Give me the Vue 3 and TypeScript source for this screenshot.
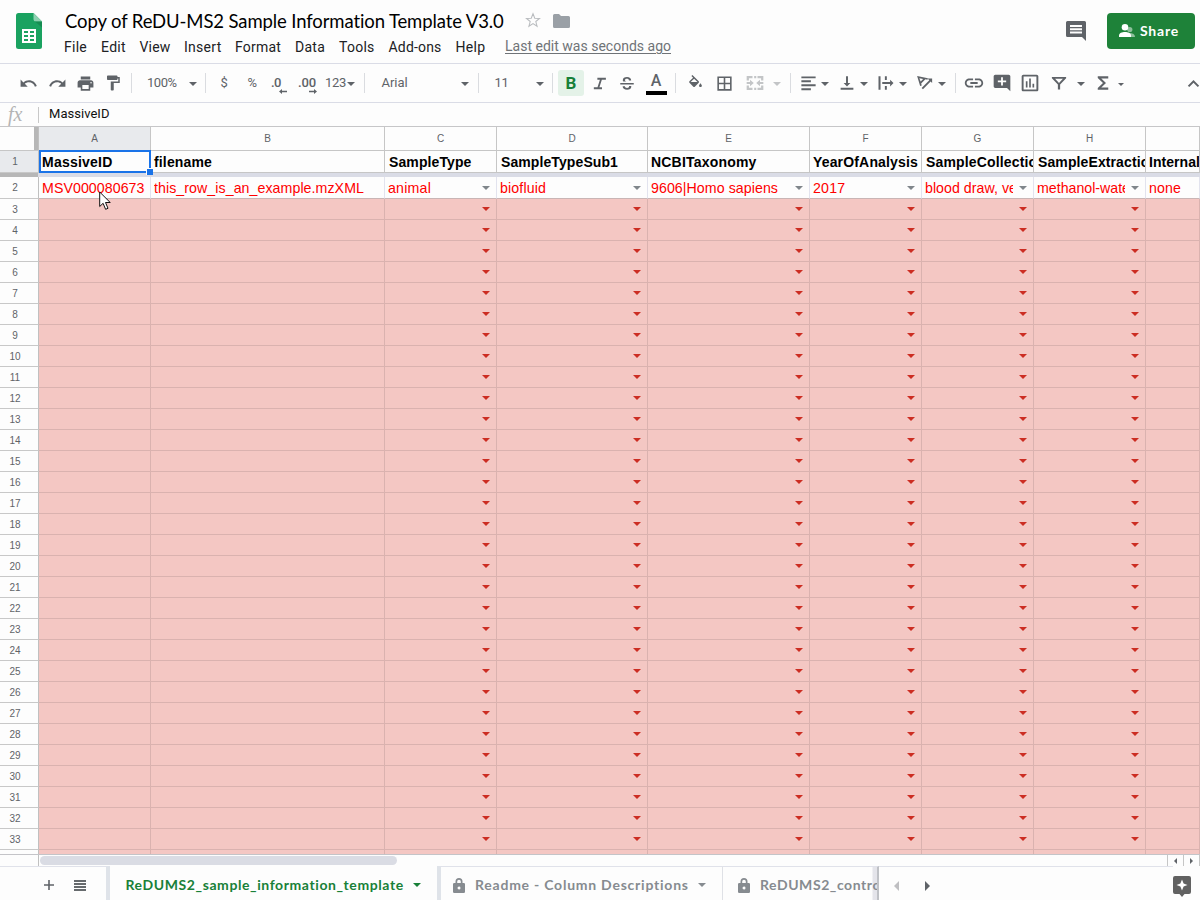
<script setup lang="ts">
interface Tool { w: number; ml?: number; kind: string; icon?: string; text?: string; tw?: number; pad?: number; size?: number; tone?: string }
interface Column { letter: string; w: number; title: string; tw: number; value: string; vw: number; menu: boolean }

/* Spreads the letters of a label so that it fills the given width. */
const vFit = {
  mounted(el: HTMLElement, binding: { value: number | undefined }) {
    if (!binding.value) return
    const count = (el.textContent || '').length
    const natural = el.getBoundingClientRect().width
    el.style.letterSpacing = (binding.value - natural) / count + 'px'
  },
}

const menus = [
  { name: 'File', w: 37, tw: 23 }, { name: 'Edit', w: 38.5, tw: 25 }, { name: 'View', w: 44.5, tw: 31 },
  { name: 'Insert', w: 51, tw: 37.5 }, { name: 'Format', w: 60, tw: 46 }, { name: 'Data', w: 44, tw: 30 },
  { name: 'Tools', w: 49.5, tw: 35.5 }, { name: 'Add-ons', w: 67, tw: 53 }, { name: 'Help', w: 49.5, tw: 30 },
]

const paths: Record<string, string> = {
  undo: 'M12.5 8c-2.65 0-5.05.99-6.9 2.6L2 7v9h9l-3.62-3.62c1.39-1.16 3.16-1.88 5.12-1.88 3.54 0 6.55 2.31 7.6 5.5l2.37-.78C21.08 11.03 17.15 8 12.5 8z',
  redo: 'M18.4 10.6C16.55 8.99 14.15 8 11.5 8c-4.65 0-8.58 3.03-9.96 7.22L3.9 16c1.05-3.19 4.05-5.5 7.6-5.5 1.95 0 3.73.72 5.12 1.88L13 16h9V7l-3.6 3.6z',
  print: 'M19 8H5c-1.66 0-3 1.34-3 3v6h4v4h12v-4h4v-6c0-1.66-1.34-3-3-3zm-3 11H8v-5h8v5zm3-7c-.55 0-1-.45-1-1s.45-1 1-1 1 .45 1 1-.45 1-1 1zm-1-9H6v4h12V3z',
  paint: 'M18 4V3c0-.55-.45-1-1-1H5c-.55 0-1 .45-1 1v4c0 .55.45 1 1 1h12c.55 0 1-.45 1-1V6h1v4H9v11c0 .55.45 1 1 1h2c.55 0 1-.45 1-1v-9h8V4h-3z',
  italic: 'M9 4v2.700h3.600L9.200 17.300H4V20h11.500v-2.700h-3.600l3.400-10.600H21V4z',
  strike: 'M3 12h18v2H3zM17.6 8.6h-3c0-1.400-1-2.200-2.600-2.200-1.700 0-2.600.7-2.600 1.800 0 .8.5 1.400 1.700 1.800H7.100C6.600 9.500 6.400 8.900 6.400 8.200 6.400 5.600 8.700 4 12 4c3.400 0 5.600 1.800 5.600 4.600zM6.200 16.300h3c.1 1.500 1.200 2.300 2.900 2.300s2.700-.7 2.700-1.800c0-.3-.1-.6-.2-.8h3c.1.3.1.6.1.9 0 2.500-2.200 4.100-5.600 4.100-3.600 0-5.900-1.800-5.900-4.700z',
  fill: 'M16.56 8.94L7.620 0 6.210 1.410l2.380 2.380-5.150 5.150c-.59.59-.59 1.540 0 2.120l5.500 5.500c.29.29.68.44 1.060.44s.77-.15 1.060-.44l5.500-5.500c.59-.58.59-1.530 0-2.120zM5.210 10L10 5.210 14.790 10H5.210zM19 11.500s-2 2.170-2 3.500c0 1.100.9 2 2 2s2-.9 2-2c0-1.330-2-3.500-2-3.500z',
  borders: 'M3 3v18h18V3H3zm8 16H5v-6h6v6zm0-8H5V5h6v6zm8 8h-6v-6h6v6zm0-8h-6V5h6v6z',
  merge: 'M2 3.500h7v2.700H4.700V9H2zM11 3.500h2.500v2.700H11zM15 3.500h7V9h-2.700V6.200H15zM2 15h2.700v2.800H9v2.700H2zM11 17.800h2.500v2.700H11zM19.300 15H22v5.500h-7v-2.700h4.300zM2 10.700h4V8.200l4.500 3.800L6 15.800v-2.500H2zM22 10.700h-4V8.200L13.500 12l4.500 3.800v-2.500h4z',
  align: 'M3 3h18v2.500H3zM3 8h12v2.500H3zM3 13h18v2.500H3zM3 18h12v2.500H3z',
  valign: 'M16.500 12h-3.200V3h-2.600v9H7.500l4.500 4.500zM3.500 18.300h17V21h-17z',
  overflow: 'M2 3h2.700v18H2zM10.500 3h2.600v5h-2.600zM10.500 16h2.600v5h-2.600zM7 10.700h10.500V7.500L22 12l-4.500 4.500v-3.200H7z',
  rotate: 'M1.500 2.500l4 13.500 2.200-.6-.8-2.800 5.600-5.600 2.800.8.600-2.200zm3 3l5 1.300-3.300 3.300zM9.300 20.300L19.500 10l2 2V6h-6l2.200 2.200L7.500 18.500z',
  link: 'M3.900 12c0-1.710 1.390-3.100 3.100-3.100h4V7H7c-2.760 0-5 2.240-5 5s2.240 5 5 5h4v-1.900H7c-1.710 0-3.100-1.390-3.100-3.100zM8 13h8v-2H8v2zm9-6h-4v1.900h4c1.710 0 3.100 1.390 3.100 3.100s-1.390 3.100-3.100 3.100h-4V17h4c2.760 0 5-2.240 5-5s-2.240-5-5-5z',
  addcomment: 'M22 4c0-1.100-.9-2-2-2H4c-1.100 0-2 .9-2 2v12c0 1.100.9 2 2 2h14l4 4V4zm-5 7.100h-3.900V15h-2.200v-3.900H7V8.900h3.900V5h2.200v3.900H17z',
  chart: 'M20 2H4c-1.100 0-2 .9-2 2v16c0 1.100.9 2 2 2h16c1.100 0 2-.9 2-2V4c0-1.100-.9-2-2-2zm-.3 17.700H4.300V4.300h15.400zM7 10h2v7.500H7zM11 6.500h2v11h-2zM15 13h2v4.500h-2z',
  filter: 'M2.500 4h19v1.600l-8 8.400v6.500h-3V14l-8-8.400zM6.800 6.300L12 12l5.200-5.700z',
  sigma: 'M19 3H5v2.300l7 6.700-7 6.700V21h14v-2.900H9.700l6.300-6.100-6.300-6.100H19z',
  chevron: 'M12 7l-8 8 2 2 6-6 6 6 2-2z',
}

const tools: Tool[] = [
  { kind: 'icon', icon: 'undo', w: 29, ml: 14, size: 19 },
  { kind: 'icon', icon: 'redo', w: 28, size: 19 },
  { kind: 'icon', icon: 'print', w: 28, size: 19 },
  { kind: 'icon', icon: 'paint', w: 28, size: 18 },
  { kind: 'sep', w: 8 },
  { kind: 'text', text: '100%', w: 49, pad: 12, tw: 29.5 },
  { kind: 'caret', w: 18 },
  { kind: 'sep', w: 7 },
  { kind: 'text', text: '$', w: 30, pad: 11.5 },
  { kind: 'text', text: '%', w: 26, pad: 8.5 },
  { kind: 'dec', text: '.0', w: 28, pad: 6, tw: 10, tone: 'left' },
  { kind: 'dec', text: '.00', w: 31, pad: 5, tw: 18, tone: 'right' },
  { kind: 'text', text: '123', w: 22, pad: 1, tw: 21 },
  { kind: 'caret', w: 9 },
  { kind: 'sep', w: 19 },
  { kind: 'text', text: 'Arial', w: 81, pad: 7.5, tw: 26 },
  { kind: 'caret', w: 20 },
  { kind: 'sep', w: 7 },
  { kind: 'text', text: '11', w: 48, pad: 12.5, tw: 14 },
  { kind: 'caret', w: 20 },
  { kind: 'sep', w: 5 },
  { kind: 'bold', w: 32 },
  { kind: 'icon', icon: 'italic', w: 24, size: 17 },
  { kind: 'icon', icon: 'strike', w: 32, size: 18 },
  { kind: 'color', w: 26 },
  { kind: 'sep', w: 13 },
  { kind: 'icon', icon: 'fill', w: 26, size: 17 },
  { kind: 'icon', icon: 'borders', w: 33, size: 19 },
  { kind: 'icon', icon: 'merge', w: 27, size: 20, tone: 'off' },
  { kind: 'caret', w: 18, tone: 'off' },
  { kind: 'sep', w: 9 },
  { kind: 'icon', icon: 'align', w: 26, size: 19 },
  { kind: 'caret', w: 8 },
  { kind: 'icon', icon: 'valign', w: 26, ml: 5, size: 18 },
  { kind: 'caret', w: 8 },
  { kind: 'icon', icon: 'overflow', w: 26, ml: 5, size: 18 },
  { kind: 'caret', w: 8 },
  { kind: 'icon', icon: 'rotate', w: 26, ml: 5, size: 18 },
  { kind: 'caret', w: 8 },
  { kind: 'sep', w: 19 },
  { kind: 'icon', icon: 'link', w: 18, size: 22 },
  { kind: 'icon', icon: 'addcomment', w: 38, size: 20 },
  { kind: 'icon', icon: 'chart', w: 18, size: 20 },
  { kind: 'icon', icon: 'filter', w: 24, ml: 8, size: 18 },
  { kind: 'caret', w: 20 },
  { kind: 'icon', icon: 'sigma', w: 24, size: 18 },
  { kind: 'caret', w: 11, tone: 'small' },
  { kind: 'icon', icon: 'chevron', w: 26, ml: 54, size: 17 },
]

const columns: Column[] = [
  { letter: 'A', w: 112, title: 'MassiveID', tw: 70.5, value: 'MSV000080673', vw: 102.5, menu: false },
  { letter: 'B', w: 234, title: 'filename', tw: 58, value: 'this_row_is_an_example.mzXML', vw: 210, menu: false },
  { letter: 'C', w: 112, title: 'SampleType', tw: 82.5, value: 'animal', vw: 43, menu: true },
  { letter: 'D', w: 151, title: 'SampleTypeSub1', tw: 117, value: 'biofluid', vw: 46, menu: true },
  { letter: 'E', w: 162, title: 'NCBITaxonomy', tw: 105.5, value: '9606|Homo sapiens', vw: 127, menu: true },
  { letter: 'F', w: 112, title: 'YearOfAnalysis', tw: 105, value: '2017', vw: 32.5, menu: true },
  { letter: 'G', w: 112, title: 'SampleCollection', tw: 120, value: 'blood draw, ve', vw: 92, menu: true },
  { letter: 'H', w: 112, title: 'SampleExtraction', tw: 120, value: 'methanol-wate', vw: 93, menu: true },
  { letter: '', w: 54, title: 'Internal', tw: 51, value: 'none', vw: 32, menu: false },
]
const emptyRows = Array.from({ length: 32 }, (_, i) => i + 3)
</script>

<template>
  <div class="app">
    <header class="top">
      <svg class="logo" width="26" height="36" viewBox="0 0 26 36">
        <path d="M2.500 0H17.500L26 8.500V33.500Q26 36 23.500 36H2.500Q0 36 0 33.500V2.500Q0 0 2.500 0z" fill="#1aa260" />
        <path d="M17.500 0L26 8.500H20Q17.500 8.500 17.500 6z" fill="#8ed1b1" />
        <path d="M19 8.500h7v6z" fill="#16834d" opacity=".7" />
        <path d="M6 16h14v14H6zM8 18v2h4v-2zm6 0v2h4v-2zm-6 4v2h4v-2zm6 0v2h4v-2zm-6 4v2h4v-2zm6 0v2h4v-2z" fill="#fff" fill-rule="evenodd" />
      </svg>
      <div class="heading">
        <div class="title-row">
          <span class="title"><span v-fit="439">Copy of ReDU-MS2 Sample Information Template V3.0</span></span>
          <svg class="star" width="16" height="16" viewBox="0 0 24 24"><path d="M12 2.500l2.600 6.800 7.200.4-5.600 4.600 1.900 7L12 17.400l-6.100 3.900 1.900-7L2.200 9.700l7.200-.4z" fill="none" stroke="#b9bcbf" stroke-width="1.600" /></svg>
          <svg class="folder" width="17" height="14" viewBox="0 0 17 14"><path d="M1.500 0H6l2 2h7.500Q17 2 17 3.500v9Q17 14 15.500 14h-14Q0 14 0 12.500v-11Q0 0 1.500 0z" fill="#9aa0a6" /></svg>
        </div>
        <nav class="menus">
          <span v-for="m in menus" :key="m.name" class="menu" :style="{ width: m.w + 'px' }"><span v-fit="m.tw">{{ m.name }}</span></span>
          <span class="edited"><span v-fit="166">Last edit was seconds ago</span></span>
        </nav>
      </div>
      <svg class="comments" width="20" height="20" viewBox="0 0 20 20"><path d="M1.500 0h17Q20 0 20 1.500V20l-4-4H1.500Q0 16 0 14.500v-13Q0 0 1.500 0zM4 4v2h12V4zm0 3.300v2h12v-2zm0 3.200v2h12v-2z" fill="#5f6368" fill-rule="evenodd" /></svg>
      <button class="share">
        <svg width="16" height="14" viewBox="0 0 16 14"><circle cx="10.800" cy="5.500" r="2.600" fill="#8dc09b" /><path d="M10 9q6 0 6 4h-5z" fill="#8dc09b" /><circle cx="6" cy="3.300" r="3.300" fill="#fff" /><path d="M0 13v-1.500C0 9 3 8 6 8s6 1 6 3.500V13z" fill="#fff" /></svg>
        <span class="share-text"><span v-fit="39">Share</span></span>
      </button>
    </header>

    <div class="toolbar">
      <div v-for="(t, i) in tools" :key="i" class="tool" :class="[t.kind, t.tone]" :style="{ width: t.w + 'px', marginLeft: (t.ml || 0) + 'px', paddingLeft: (t.pad || 0) + 'px' }">
        <svg v-if="t.kind === 'icon'" :width="t.size" :height="t.size" viewBox="0 0 24 24"><path :d="paths[t.icon || '']" fill="currentColor" fill-rule="evenodd" /></svg>
        <i v-else-if="t.kind === 'caret'" class="arrow"></i>
        <i v-else-if="t.kind === 'sep'" class="rule"></i>
        <span v-else-if="t.kind === 'bold'" class="bold-box">B</span>
        <span v-else-if="t.kind === 'color'" class="color-box"><span>A</span><i></i></span>
        <template v-else>
          <span v-fit="t.tw">{{ t.text }}</span>
          <svg v-if="t.kind === 'dec'" class="shift" width="8" height="5" viewBox="0 0 8 5"><path v-if="t.tone === 'left'" d="M3 0v1.700h5v1.500H3V5L0 2.500z" fill="#5f6368" /><path v-else d="M5 0v1.700H0v1.500h5V5l3-2.500z" fill="#5f6368" /></svg>
        </template>
      </div>
    </div>

    <div class="formula"><span class="fx">fx</span><span class="value"><span v-fit="60.5">MassiveID</span></span></div>

    <main class="sheet">
      <div class="row letters">
        <div class="corner"></div>
        <div v-for="(c, i) in columns" :key="i" class="cell" :class="{ chosen: i === 0 }" :style="{ width: c.w + 'px' }">{{ c.letter }}</div>
      </div>
      <div class="row titles">
        <div class="num chosen">1</div>
        <div v-for="(c, i) in columns" :key="i" class="cell" :class="{ deep: i >= 2 && i !== 4 && i !== 5 && i !== 8 }" :style="{ width: c.w + 'px' }"><span v-fit="c.tw">{{ c.title }}</span></div>
        <div class="selection"><i></i></div>
      </div>
      <div class="freeze"><i></i></div>
      <div class="row sample">
        <div class="num">2</div>
        <div v-for="(c, i) in columns" :key="i" class="cell" :class="{ listed: c.menu }" :style="{ width: c.w + 'px' }">
          <div class="clip"><span v-fit="c.vw">{{ c.value }}</span></div><i v-if="c.menu" class="arrow"></i>
        </div>
      </div>
      <div class="blanks">
        <div v-for="n in emptyRows" :key="n" class="row blank">
          <div class="num">{{ n }}</div>
          <div v-for="(c, i) in columns" :key="i" class="cell" :style="{ width: c.w + 'px' }"><i v-if="c.menu" class="arrow"></i></div>
        </div>
      </div>
      <svg class="pointer" width="13" height="20" viewBox="0 0 13 20"><path d="M.7 1v14.500l3.400-3.200 2.500 6 2.400-1-2.500-5.800h4.700z" fill="#fff" stroke="#111" stroke-width="1" /></svg>
    </main>

    <div class="scroll">
      <div class="gutter"></div><div class="track"><div class="thumb"></div></div>
      <div class="step"><i class="to-left"></i></div><div class="step"><i class="to-right"></i></div>
    </div>

    <footer class="tabs">
      <div class="controls">
        <svg width="10" height="10" viewBox="0 0 10 10"><path d="M4.200 0h1.600v4.200H10v1.600H5.800V10H4.200V5.800H0V4.200h4.200z" fill="#5f6368" /></svg>
        <svg width="12" height="11" viewBox="0 0 12 11"><path d="M0 0h12v2H0zM0 3h12v2H0zM0 6h12v2H0zM0 9h12v2H0z" fill="#666a6d" /></svg>
      </div>
      <div class="tab active"><span class="name"><span v-fit="278.5">ReDUMS2_sample_information_template</span></span><i class="arrow"></i></div>
      <div class="tab second">
        <svg class="lock" width="12" height="15" viewBox="0 0 12 15"><path d="M1.200 5H2.500V3.500a3.500 3.500 0 0 1 7 0V5h1.300Q12 5 12 6.200v7.600Q12 15 10.800 15H1.200Q0 15 0 13.800V6.200Q0 5 1.200 5zM4.200 5h3.600V3.500a1.800 1.800 0 0 0-3.600 0zM6 8.500a1.500 1.500 0 1 0 .01 3 1.500 1.500 0 0 0-.01-3z" fill="#868b90" fill-rule="evenodd" /></svg>
        <span class="name"><span v-fit="214">Readme - Column Descriptions</span></span><i class="arrow"></i>
      </div>
      <div class="tab third">
        <svg class="lock" width="12" height="15" viewBox="0 0 12 15"><path d="M1.200 5H2.500V3.500a3.500 3.500 0 0 1 7 0V5h1.300Q12 5 12 6.200v7.600Q12 15 10.800 15H1.200Q0 15 0 13.800V6.200Q0 5 1.200 5zM4.200 5h3.600V3.500a1.800 1.800 0 0 0-3.600 0zM6 8.500a1.500 1.500 0 1 0 .01 3 1.500 1.500 0 0 0-.01-3z" fill="#868b90" fill-rule="evenodd" /></svg>
        <span class="name"><span v-fit="121">ReDUMS2_contro</span></span>
      </div>
      <div class="pager"><i class="to-left"></i><i class="to-right"></i></div>
      <svg class="explore" width="18" height="21" viewBox="0 0 18 21"><path d="M2 0h14q2 0 2 2v14q0 2-2 2h-4.500L9 21l-2.500-3H2q-2 0-2-2V2Q0 0 2 0z" fill="#616161" /><path d="M9 3.500l1.600 3.900 3.900 1.600-3.900 1.600L9 14.500l-1.600-3.900L3.500 9l3.900-1.600z" fill="#fff" /></svg>
    </footer>
  </div>
</template>

<style>
body { margin: 0; overflow: hidden; }
</style>

<style scoped>
.app { width: 1200px; height: 900px; display: flex; flex-direction: column; overflow: hidden; background: #fdfdfd; font-family: Roboto, "Liberation Sans", sans-serif; }
.app * { box-sizing: border-box; }
.app span { white-space: nowrap; }
svg { flex: none; display: block; }
.top { height: 64px; flex: none; display: flex; border-bottom: 1px solid #dadce6; }
.logo { margin: 13px 0 0 16px; }
.heading { width: 1024px; flex: none; padding-left: 22px; }
.title-row { display: flex; height: 36px; padding-top: 7px; }
.title { width: 461px; padding-left: 1px; font: 18.500px/28px Lato, sans-serif; color: #000; }
.star { margin-top: 5px; }
.folder { margin: 7px 0 0 11.5px; }
.menus { display: flex; padding-top: 1px; font-size: 14px; line-height: 20px; color: #202124; }
.menu { flex: none; }
.edited { color: #6f7377; line-height: 18px; text-decoration: underline; text-underline-offset: 2px; }
.comments { margin: 21px 21px 0 0; }
.share { display: flex; flex: none; align-items: center; gap: 5px; width: 88px; height: 36px; margin-top: 13px; padding: 0 0 1px 12px; border: 0; border-radius: 4px; background: #1e8239; color: #fff; font: bold 14px Lato, sans-serif; }
.share-text { padding-bottom: 1px; }

.toolbar { height: 39px; flex: none; display: flex; border-bottom: 1px solid #dadce6; overflow: hidden; color: #5f6368; font-size: 13px; }
.tool { flex: none; display: flex; align-items: center; justify-content: center; height: 38px; }
.text, .dec { justify-content: flex-start; padding-bottom: 1px; }
.dec { font-weight: 500; font-size: 13px; }
.shift { margin: 17px 0 0 -2px; }
.right .shift { margin-left: -7px; }
.off { color: #c3c5c7; }
.rule { width: 1px; height: 20px; background: #dadce0; }
.arrow { display: block; flex: none; width: 0; height: 0; border: 4px solid transparent; border-top-color: currentColor; border-bottom: 0; }
.tool .arrow { margin-top: 1px; }
.small .arrow { border-width: 3px 3px 0; margin-top: 2px; }
.bold-box { width: 26px; height: 26px; border-radius: 3px; background: #e4f2e8; color: #188038; font: bold 17px/27px Roboto, sans-serif; text-align: center; }
.color-box { display: flex; flex-direction: column; align-items: center; width: 21px; font: 500 16px/17px Roboto, sans-serif; }
.color-box i { width: 21px; height: 4px; margin-top: 2px; background: #000; }

.formula { height: 24px; flex: none; display: flex; align-items: center; border-bottom: 1px solid #c6c6c8; }
.fx { width: 39px; height: 16px; padding-left: 8px; border-right: 1px solid #c8c8c8; font: italic 20px/14px "Liberation Serif", serif; color: #b4b4b4; }
.value { padding-left: 10px; padding-bottom: 2px; font-size: 13px; color: #111; }

.sheet { position: relative; height: 728px; flex: none; display: flex; flex-direction: column; overflow: hidden; border-bottom: 1px solid #c4c4c8; font-family: "Liberation Sans", Arial, sans-serif; }
.row { display: flex; flex: none; }
.cell { flex: none; border-right: 1px solid #c6c6c6; border-bottom: 1px solid #c6c6c6; overflow: hidden; white-space: nowrap; }
.num { flex: none; width: 39px; padding-right: 8px; border-right: 1px solid #c0c0c0; border-bottom: 1px solid #c8c8c8; text-align: center; font-family: "Liberation Sans", Arial, sans-serif; font-size: 10px; line-height: 21px; color: #5f6368; }
.letters { height: 24px; }
.letters .cell { text-align: center; font: 10px/24px "Liberation Sans", Arial, sans-serif; color: #5f6368; }
.corner { flex: none; width: 39px; border-right: 1px solid #c0c0c0; border-bottom: 1px solid #c6c6c6; background: linear-gradient(90deg, transparent 34px, #b7b7b7 34px); }
.chosen { background: #e8eaed; }
.titles { position: relative; height: 22px; font-weight: bold; font-size: 14px; line-height: 22px; color: #000; }
.titles .num { font-weight: normal; }
.titles .cell { padding-left: 3px; }
.titles .deep { padding-left: 4px; }
.selection { position: absolute; left: 39px; top: -1px; width: 112px; height: 23px; border: 2px solid #1a73e8; }
.selection i { position: absolute; right: -4px; bottom: -4px; width: 7px; height: 7px; border: 1px solid #fdfdfd; border-width: 1px 0 0 1px; background: #1a73e8; }
.freeze { height: 4px; flex: none; background: #dadce6; }
.freeze i { display: block; width: 38px; height: 4px; background: #b7b7b7; }
.sample { height: 22px; color: #f00; font-size: 14.200px; line-height: 22px; }
.sample .cell { display: flex; align-items: center; justify-content: space-between; padding-left: 3px; border-right-color: #e2e3ee; border-bottom-color: #c9b5b5; }
.clip { overflow: hidden; }
.listed .clip { width: calc(100% - 20px); }
.cell .arrow { margin-right: 6px; color: #80868b; }
.blanks { flex: 1; min-height: 0; overflow: hidden; }
.blank { height: 21px; }
.blank .cell { display: flex; align-items: center; justify-content: flex-end; background: #f4c7c3; border-color: #dab2af; }
.blank .cell .arrow { color: #cc2d22; margin-bottom: 1px; }
.pointer { position: absolute; left: 99px; top: 64px; }

.scroll { height: 11px; flex: none; display: flex; }
.gutter { width: 39px; border-right: 1px solid #c0c0c0; }
.track { flex: 1; padding: 1px; }
.thumb { width: 357px; height: 9px; border-radius: 5px; background: #dadce4; }
.step { width: 16px; border-left: 1px solid #c6c6c6; display: flex; align-items: center; justify-content: center; }
.step:last-child { width: 17px; border-right: 1px solid #c6c6c6; }
.to-left, .to-right { width: 0; height: 0; border: 3px solid transparent; border-right: 3px solid #5f6368; border-left: 0; }
.to-right { border-left: 3px solid #5f6368; border-right: 0; }

.tabs { flex: 1; display: flex; }
.controls { width: 110px; display: flex; align-items: center; gap: 20px; padding: 3px 0 0 44px; border-top: 1px solid #e0e2ea; border-right: 4px solid #dfe3e9; }
.tab { flex: none; display: flex; align-items: center; padding-top: 3px; border-top: 1px solid #e0e2ea; color: #868b90; font: bold 14px/20px Lato, sans-serif; overflow: hidden; }
.active { width: 327px; padding-left: 15.500px; color: #188038; border-top-color: transparent; }
.active .name { width: 287.500px; }
.second { width: 286px; padding-left: 12px; border-left: 4px solid #dfe3e9; border-right: 1px solid #dfe1e6; }
.second .name { width: 223px; }
.lock { margin-right: 10px; }
.third { width: 156px; padding-left: 15px; border-right: 2px solid #bfc1c6; background: linear-gradient(90deg, transparent 149px, #e4e4ea 150px); }
.pager { width: 294px; display: flex; align-items: center; gap: 26px; padding: 4px 0 0 15px; border-top: 1px solid #e0e2ea; }
.pager i { border-width: 5px; }
.pager .to-left { border-right-color: #bfbfc2; }
.explore { margin-top: 10px; }
</style>
